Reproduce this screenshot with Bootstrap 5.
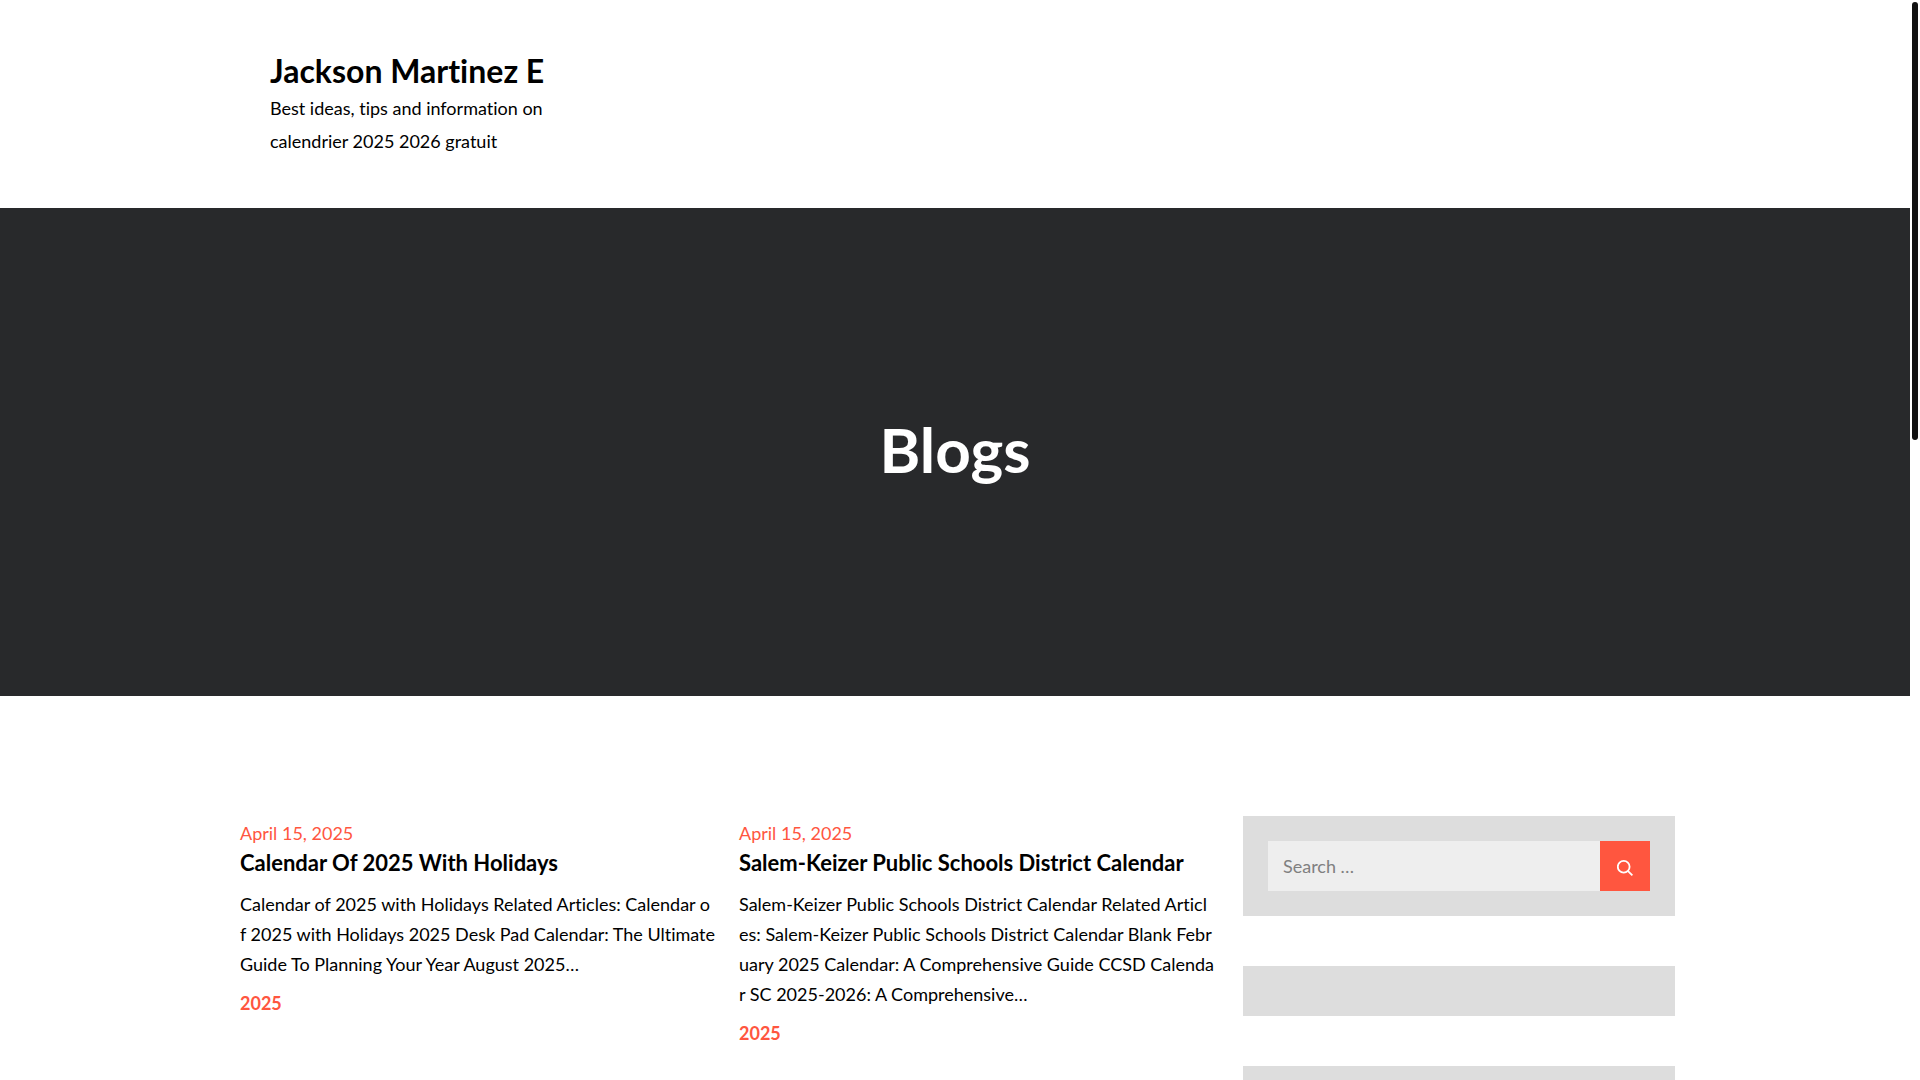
<!DOCTYPE html>
<html lang="en">
<head>
<meta charset="utf-8">
<meta name="viewport" content="width=device-width, initial-scale=1">
<title>Jackson Martinez E</title>
<link href="https://cdn.jsdelivr.net/npm/bootstrap@5.3.0/dist/css/bootstrap.min.css" rel="stylesheet">
<style>
  :root { --accent: #ff563f; scrollbar-width: none; }
  ::-webkit-scrollbar { display: none; }
  body { font-family: Lato, "Liberation Sans", sans-serif; font-size: 18px; line-height: 30px; font-variant-ligatures: none; color: #000; padding-right: 10px; background: #fff; }
  a { text-decoration: none; }
  .wrap { max-width: 1440px; }
  .site-head { padding: 50px 35px; }
  .branding { max-width: 300px; }
  .site-title { font-size: 32px; line-height: 42px; font-weight: 700; }
  .site-title a, .post-title a { color: #000; }
  .tagline { line-height: 33px; }
  .banner { background: #28292b; padding: 205px 0 211px; }
  .banner h1 { font-size: 62px; line-height: 72px; font-weight: 700; }
  .main-area { padding-top: 120px; }
  .posts { flex: 0 0 70%; min-width: 0; padding: 2px 35px 0 5px; gap: 30px; }
  .post { flex: 1 1 0; min-width: 0; }
  .post-date, .post-tag { color: var(--accent); }
  .post-title { font-family: Lato, sans-serif; font-size: 22px; line-height: 30px; font-weight: 700; }
  .excerpt { white-space: nowrap; margin: 11px 0 9px; }
  .sidebar { flex: 0 0 30%; gap: 50px; }
  .widget { background: #ddd; padding: 25px; }
  .search-form .form-control { height: 50px; background: #eee; padding: 0 15px; font-size: 18px; color: #000; }
  .search-form .form-control::placeholder { color: #808080; }
  .search-form .btn { width: 50px; height: 50px; background: var(--accent); }
  .scroll-thumb { width: 6px; height: 438px; top: 2px; right: 2px; border-radius: 3px; background: #111; }
</style>
</head>
<body>
<header class="wrap mx-auto site-head">
  <div class="branding">
    <p class="site-title mb-0"><a href="#">Jackson Martinez E</a></p>
    <p class="tagline mb-0">Best ideas, tips and information on calendrier 2025 2026 gratuit</p>
  </div>
</header>

<section class="banner text-center text-white">
  <h1 class="mb-0">Blogs</h1>
</section>

<div class="wrap mx-auto main-area d-flex align-items-start">
  <main class="posts d-flex">
    <article class="post">
      <a class="post-date d-block" href="#">April 15, 2025</a>
      <h2 class="post-title mb-0"><a href="#">Calendar Of 2025 With Holidays</a></h2>
      <p class="excerpt">Calendar of 2025 with Holidays Related Articles: Calendar o<br>f 2025 with Holidays 2025 Desk Pad Calendar: The Ultimate<br>Guide To Planning Your Year August 2025…</p>
      <a class="post-tag fw-bold" href="#">2025</a>
    </article>
    <article class="post">
      <a class="post-date d-block" href="#">April 15, 2025</a>
      <h2 class="post-title mb-0"><a href="#">Salem-Keizer Public Schools District Calendar</a></h2>
      <p class="excerpt">Salem-Keizer Public Schools District Calendar Related Articl<br>es: Salem-Keizer Public Schools District Calendar Blank Febr<br>uary 2025 Calendar: A Comprehensive Guide CCSD Calenda<br>r SC 2025-2026: A Comprehensive…</p>
      <a class="post-tag fw-bold" href="#">2025</a>
    </article>
  </main>
  <aside class="sidebar d-flex flex-column">
    <section class="widget">
      <form class="search-form d-flex" role="search">
        <input class="form-control border-0 rounded-0 shadow-none" id="site-search" type="search" placeholder="Search …" aria-label="Search for">
        <button class="btn border-0 rounded-0 p-0 flex-shrink-0 d-flex align-items-center justify-content-center" type="submit" aria-label="Search">
          <svg width="16" height="20" viewBox="0 0 16 20" fill="none" stroke="#fff" stroke-width="1.8" aria-hidden="true"><circle cx="6.7" cy="10.7" r="5.9"/><path d="M10.8 14.8l4.6 4.6"/></svg>
        </button>
      </form>
    </section>
    <section class="widget"></section>
    <section class="widget"></section>
  </aside>
</div>

<div class="scroll-thumb position-fixed" aria-hidden="true"></div>
<script src="https://cdn.jsdelivr.net/npm/bootstrap@5.3.0/dist/js/bootstrap.bundle.min.js"></script>
</body>
</html>
